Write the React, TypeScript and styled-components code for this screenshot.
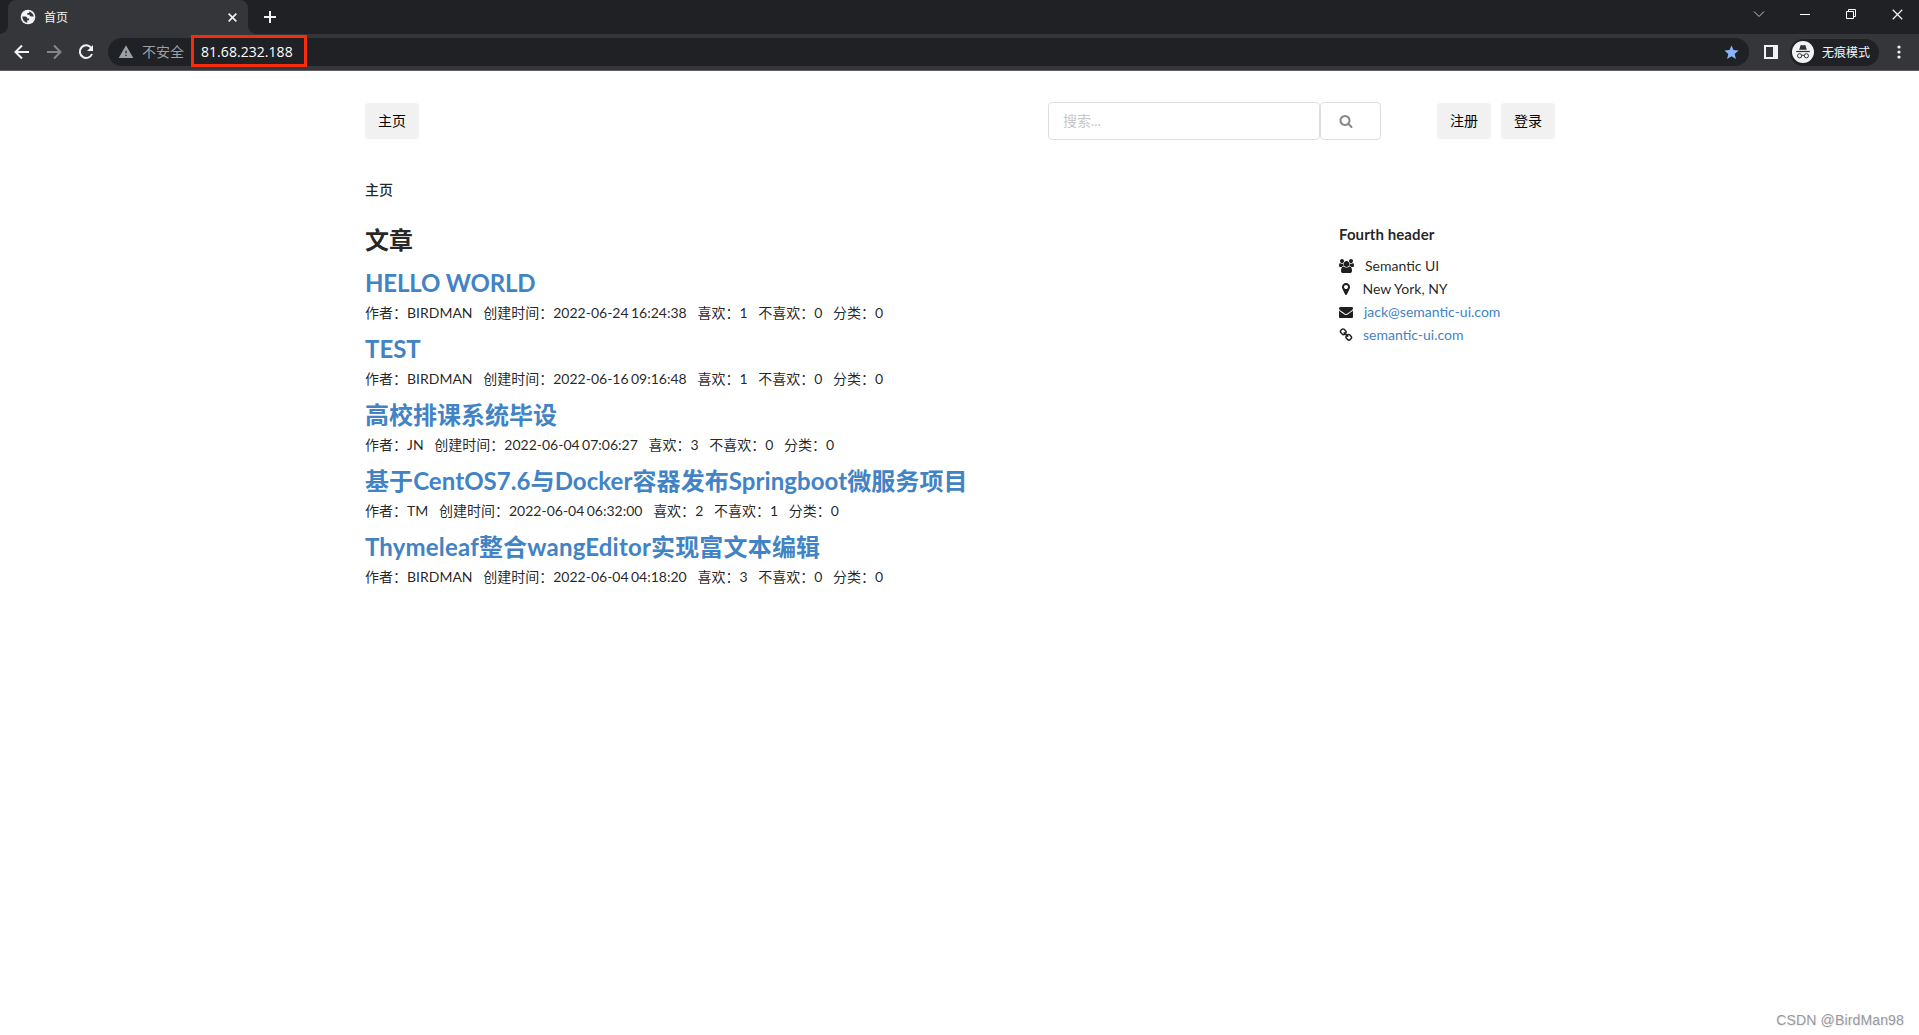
import React from "react";
import styled, { createGlobalStyle } from "styled-components";
import { MdStar, MdWarning } from "react-icons/md";

const GlobalStyle = createGlobalStyle`
  *, *::before, *::after { box-sizing: border-box; }
  body {
    margin: 0;
    background: #fff;
    color: rgba(0, 0, 0, 0.87);
    font-family: Lato, "Noto Sans CJK SC", sans-serif;
    font-size: 14px;
    overflow: hidden;
  }
  svg { display: block; flex: none; }
`;

const Window = styled.div`
  position: relative;
  width: 100%;
  height: 100vh;
  display: flex;
  flex-direction: column;
`;

/* ---------- browser chrome ---------- */

const chromeFont = `"Open Sans", "Noto Sans CJK SC", sans-serif`;

const TitleBar = styled.header`
  display: flex;
  height: 34px;
  padding-left: 8px;
  background: #202124;
  color: #f1f3f4;
  font-family: ${chromeFont};
`;

const Tab = styled.div`
  position: relative;
  display: flex;
  align-items: center;
  width: 240px;
  padding: 0 11px 0 12px;
  border-radius: 8px 8px 0 0;
  background: #35363a;
  font-size: 12px;

  &::before,
  &::after {
    content: "";
    position: absolute;
    bottom: 0;
    width: 8px;
    height: 8px;
  }
  &::before {
    left: -8px;
    background: radial-gradient(circle at 0 0, #202124 7.5px, #35363a 8px);
  }
  &::after {
    right: -8px;
    background: radial-gradient(circle at 100% 0, #202124 7.5px, #35363a 8px);
  }
`;

const TabTitle = styled.span`
  flex: 1;
  margin-left: 8px;
`;

const NewTab = styled.div`
  display: flex;
  align-items: center;
  margin-left: 15px;
`;

const WindowControls = styled.div`
  display: grid;
  grid-template-columns: repeat(4, 46px);
  place-items: center;
  height: 28px;
  margin: 0 -1px 0 auto;
`;

const Toolbar = styled.nav`
  display: flex;
  align-items: center;
  height: 37px;
  padding: 0 13px 0 12px;
  border-bottom: 1px solid #5f5d66;
  background: #35363a;
  color: #f1f3f4;
  font-family: ${chromeFont};
`;

const NavButtons = styled.div`
  display: flex;
  gap: 12px;
  margin-right: 12px;
`;

const AddressBar = styled.div`
  display: flex;
  align-items: center;
  flex: 1;
  height: 28px;
  padding: 0 9px 0 10px;
  border-radius: 14px;
  background: #202124;
  font-size: 14px;
`;

const Insecure = styled.span`
  margin: -2px 0 0 8px;
  color: #9aa0a6;
`;

const UrlBox = styled.span`
  display: flex;
  align-items: center;
  width: 116px;
  height: 32px;
  margin: -2px 0 0 7px;
  padding-left: 7px;
  border: 3px solid #f62c0b;
  color: #fff;
  font-size: 14px;
  letter-spacing: 0.05px;
  white-space: nowrap;
`;

const StarSlot = styled.span`
  margin-left: auto;
`;

const PanelSlot = styled.span`
  margin-left: 15px;
`;

const Profile = styled.div`
  display: flex;
  align-items: center;
  gap: 8px;
  width: 89px;
  height: 27px;
  margin: 0 13px 0 12px;
  padding-left: 2px;
  border-radius: 14px;
  background: #202124;
  font-size: 12px;
  white-space: nowrap;
`;

/* ---------- page ---------- */

const Container = styled.main`
  width: 1190px;
  margin-left: 365px;
  padding-top: 31px;
`;

const TopRow = styled.div`
  display: flex;
  align-items: center;
  height: 38px;
`;

const Button = styled.button<{ $width: number }>`
  width: ${(p) => p.$width}px;
  height: 36px;
  padding: 0;
  border: 0;
  border-radius: 4px;
  background: #f1f1f1;
  color: #000;
  font: 14px/36px Lato, "Noto Sans CJK SC", sans-serif;
`;

const Search = styled.div`
  display: flex;
  margin: 0 56px 0 auto;
`;

const SearchInput = styled.input`
  width: 272px;
  height: 38px;
  padding: 0 14px 2px;
  border: 1px solid #dededf;
  border-radius: 4px;
  outline: 0;
  font: 14px Lato, "Noto Sans CJK SC", sans-serif;
  &::placeholder { color: #c7c7c7; opacity: 1; }
`;

const SearchButton = styled.div`
  display: flex;
  align-items: center;
  width: 61px;
  height: 38px;
  padding-left: 17.5px;
  border: 1px solid #dededf;
  border-radius: 4px;
  color: #888;
`;

const Account = styled.div`
  display: flex;
  gap: 10px;
`;

const Breadcrumb = styled.div`
  height: 20px;
  margin-top: 40px;
  font-weight: 500;
  line-height: 20px;
`;

const Columns = styled.div`
  display: flex;
  justify-content: space-between;
  margin-top: 25px;
`;

const SectionTitle = styled.h2`
  margin: 0;
  font-size: 24px;
  line-height: 30px;
`;

const Article = styled.article`
  height: 66.1px;
  padding-top: 12px;
`;

const ArticleTitle = styled.h2<{ $spacing?: number }>`
  margin: 0;
  color: #4183c4;
  font-size: 24px;
  line-height: 32px;
  letter-spacing: ${(p) => p.$spacing ?? 0}px;
  white-space: nowrap;
`;

const Meta = styled.div`
  display: flex;
  gap: 10.7px;
  height: 20px;
  margin-top: 4px;
  line-height: 20px;
  word-spacing: -1.2px;
  white-space: nowrap;
`;

const Sidebar = styled.aside`
  width: 216px;
`;

const SidebarTitle = styled.h4`
  margin: -1px 0 10px;
  font-size: 15px;
  line-height: 20px;
  letter-spacing: 0.08px;
`;

const ContactRow = styled.div`
  display: flex;
  align-items: center;
  height: 23px;
`;

const IconSlot = styled.span<{ $width: number }>`
  display: flex;
  width: ${(p) => p.$width}px;
  color: #1f1f1f;
`;

const Contact = styled.span<{ $link?: boolean }>`
  color: ${(p) => (p.$link ? "#4183c4" : "rgba(0, 0, 0, 0.87)")};
`;

const Watermark = styled.div`
  position: absolute;
  right: 15px;
  bottom: 5px;
  color: #999;
  font: 14px/20px "Liberation Sans", sans-serif;
  letter-spacing: 0.15px;
  text-shadow: 1px 1px 0 #eee;
`;

/* ---------- Font Awesome 4 shapes ---------- */

const shapes = {
  users:
    "M593 896q-162 5-265 128h-134q-82 0-138-40.5t-56-118.5q0-353 124-353 6 0 43.5 21t97.5 42.5 119 21.5q67 0 133-23-5 37-5 66 0 139 81 256zm1071 637q0 120-73 189.5t-194 69.5h-874q-121 0-194-69.5t-73-189.5q0-53 3.5-103.5t14-109 26.5-108.5 43-97.5 62-81 85.5-53.5 111.5-20q10 0 43 21.5t73 48 107 48 135 21.5 135-21.5 107-48 73-48 43-21.5q61 0 111.5 20t85.5 53.5 62 81 43 97.5 26.5 108.5 14 109 3.5 103.5zm-1024-1277q0 106-75 181t-181 75-181-75-75-181 75-181 181-75 181 75 75 181zm704 384q0 159-112.5 271.5t-271.5 112.5-271.5-112.5-112.5-271.5 112.5-271.5 271.5-112.5 271.5 112.5 112.5 271.5zm576 225q0 78-56 118.5t-138 40.5h-134q-103-123-265-128 81-117 81-256 0-29-5-66 66 23 133 23 59 0 119-21.5t97.5-42.5 43.5-21q124 0 124 353zm-128-609q0 106-75 181t-181 75-181-75-75-181 75-181 181-75 181 75 75 181z",
  marker:
    "M1152 640q0-106-75-181t-181-75-181 75-75 181 75 181 181 75 181-75 75-181zm256 0q0 109-33 179l-364 774q-16 33-47.5 52t-67.5 19-67.5-19-46.5-52l-365-774q-33-70-33-179 0-212 150-362t362-150 362 150 150 362z",
  mail:
    "M1792 710v794q0 66-47 113t-113 47h-1472q-66 0-113-47t-47-113v-794q44 49 101 87 362 246 497 345 57 42 92.5 65.5t94.5 48 110 24.5h2q51 0 110-24.5t94.5-48 92.5-65.5q170-123 498-345 57-39 100-87zm0-294q0 79-49 151t-122 123q-376 261-468 325-10 7-42.5 31t-54 38.5-52 32.5-57.5 27-50 9h-2q-23 0-50-9t-57.5-27-52-32.5-54-38.5-42.5-31q-91-64-262-182.5t-205-142.5q-62-42-117-115.5t-55-136.5q0-78 41.5-130t118.5-52h1472q65 0 112.5 47t47.5 113z",
  link:
    "M1520 1216q0-40-28-68l-208-208q-28-28-68-28-42 0-72 32 3 3 19 18.5t21.5 21.5 15 19 13 25.5 3.5 27.5q0 40-28 68t-68 28q-15 0-27.5-3.5t-25.5-13-19-15-21.5-21.5-18.5-19q-33 31-33 73 0 40 28 68l206 207q27 27 68 27 40 0 68-26l147-146q28-28 28-67zm-703-705q0-40-28-68l-206-207q-28-28-68-28-39 0-68 27l-147 146q-28 28-28 67 0 40 28 68l208 208q27 27 68 27 42 0 72-31-3-3-19-18.5t-21.5-21.5-15-19-13-25.5-3.5-27.5q0-40 28-68t68-28q15 0 27.5 3.5t25.5 13 19 15 21.5 21.5 18.5 19q33-31 33-73zm895 705q0 120-85 203l-147 146q-83 83-203 83-121 0-204-85l-206-207q-83-83-83-203 0-123 88-209l-88-88q-86 88-208 88-120 0-204-84l-208-208q-84-84-84-204t85-203l147-146q83-83 203-83 121 0 204 85l206 207q83 83 83 203 0 123-88 209l88 88q86-88 208-88 120 0 204 84l208 208q84 84 84 204z",
  search:
    "M1216 832q0-185-131.5-316.5t-316.5-131.5-316.5 131.5-131.5 316.5 131.5 316.5 316.5 131.5 316.5-131.5 131.5-316.5zm512 832q0 52-38 90t-90 38q-54 0-90-38l-343-342q-179 124-399 124-143 0-273.5-55.5t-225-150-150-225-55.5-273.5 55.5-273.5 150-225 225-150 273.5-55.5 273.5 55.5 225 150 150 225 55.5 273.5q0 220-124 399l343 343q37 37 37 90z",
};

type ShapeName = keyof typeof shapes;

const Shape = ({ name }: { name: ShapeName }) => {
  const units = name === "users" ? 1920 : 1792;
  return (
    <svg width={(units / 1792) * 14} height={14} viewBox={`0 0 ${units} 1792`} fill="currentColor">
      <path d={shapes[name]} />
    </svg>
  );
};

const GlobeIcon = () => (
  <svg width="16" height="16" viewBox="0 0 16 16">
    <circle cx="8" cy="8" r="7.3" fill="#f1f3f4" />
    <path
      d="M2.3 7.6h3.2q1.6.2 1.8 1.8h1.8v1.8H7.2v2.6q-4.6-.9-4.9-6.2zM9.2 2.4v1.5H7.3v1.9h2q.3 1.7 2.1 1.8h2.3Q13.200 3.600 9.200 2.400z"
      fill="#35363a"
    />
  </svg>
);

const ArrowIcon = ({ forward }: { forward?: boolean }) => (
  <svg width="20" height="20" viewBox="0 0 20 20" fill="none" stroke={forward ? "#85868a" : "#f1f3f4"} strokeWidth="2">
    <path d={forward ? "M3 10h13M10 3.5l6.5 6.5-6.5 6.5" : "M17 10H4M10 3.5L3.5 10l6.5 6.5"} />
  </svg>
);

const ReloadIcon = () => (
  <svg width="20" height="20" viewBox="0 0 20 20" fill="none" stroke="#f1f3f4" strokeWidth="2">
    <path d="M15.3 6A6.3 6.3 0 1 0 16 12" />
    <path d="M17 3v6h-6z" fill="#f1f3f4" stroke="none" />
  </svg>
);

const CloseIcon = ({ size, weight }: { size: number; weight: number }) => (
  <svg width={size} height={size} viewBox="0 0 10 10" stroke="#f1f3f4" strokeWidth={weight}>
    <path d="M.7.7l8.6 8.6M9.3.7L.7 9.3" />
  </svg>
);

const IncognitoIcon = () => (
  <svg width="22" height="22" viewBox="0 0 22 22" fill="none" stroke="#303135">
    <circle cx="11" cy="11" r="11" fill="#f1f3f4" stroke="none" />
    <path d="M7.2 8.8l1.3-4.4q.3-.6 1-.3l1.5.5 1.5-.5q.7-.3 1 .3l1.3 4.4z" fill="#303135" stroke="none" />
    <path d="M4.2 10.5h13.6" strokeWidth="1.2" />
    <circle cx="7.6" cy="14.8" r="2.1" />
    <circle cx="14.4" cy="14.8" r="2.1" />
    <path d="M9.7 14.5q1.3-.9 2.6 0" />
  </svg>
);

interface Post {
  title: string;
  spacing?: number;
  author: string;
  created: string;
  likes: number;
  dislikes: number;
  category: number;
}

const posts: Post[] = [
  { title: "HELLO WORLD", spacing: -0.15, author: "BIRDMAN", created: "2022-06-24 16:24:38", likes: 1, dislikes: 0, category: 0 },
  { title: "TEST", author: "BIRDMAN", created: "2022-06-16 09:16:48", likes: 1, dislikes: 0, category: 0 },
  { title: "高校排课系统毕设", author: "JN", created: "2022-06-04 07:06:27", likes: 3, dislikes: 0, category: 0 },
  { title: "基于CentOS7.6与Docker容器发布Springboot微服务项目", spacing: 0.07, author: "TM", created: "2022-06-04 06:32:00", likes: 2, dislikes: 1, category: 0 },
  { title: "Thymeleaf整合wangEditor实现富文本编辑", spacing: 0.18, author: "BIRDMAN", created: "2022-06-04 04:18:20", likes: 3, dislikes: 0, category: 0 },
];

const contacts: { icon: ShapeName; text: string; offset: number; link?: boolean }[] = [
  { icon: "users", text: "Semantic UI", offset: 26 },
  { icon: "marker", text: "New York, NY", offset: 23.5 },
  { icon: "mail", text: "jack@semantic-ui.com", offset: 25, link: true },
  { icon: "link", text: "semantic-ui.com", offset: 24, link: true },
];

export default function App() {
  return (
    <Window>
      <GlobalStyle />
      <TitleBar>
        <Tab>
          <GlobeIcon />
          <TabTitle>首页</TabTitle>
          <CloseIcon size={9} weight={1.8} />
        </Tab>
        <NewTab>
          <svg width="14" height="14" viewBox="0 0 14 14" stroke="#f1f3f4" strokeWidth="2">
            <path d="M7 1v12M1 7h12" />
          </svg>
        </NewTab>
        <WindowControls>
          <svg width="18" height="10" viewBox="0 0 18 10" fill="none" stroke="#c8c9ca">
            <path d="M4 2.5l5 5 5-5" />
          </svg>
          <svg width="18" height="10" viewBox="0 0 18 10" stroke="#fff">
            <path d="M4 5.5h10" />
          </svg>
          <svg width="16" height="10" viewBox="0 0 16 10" fill="none" stroke="#fff">
            <path d="M3.500 2.500h7v7h-7zM5.500 2.500v-2h7v7h-2" />
          </svg>
          <CloseIcon size={11} weight={1.1} />
        </WindowControls>
      </TitleBar>
      <Toolbar>
        <NavButtons>
          <ArrowIcon />
          <ArrowIcon forward />
          <ReloadIcon />
        </NavButtons>
        <AddressBar>
          <MdWarning size={16} color="#9aa0a6" />
          <Insecure>不安全</Insecure>
          <UrlBox>81.68.232.188</UrlBox>
          <StarSlot>
            <MdStar size={17} color="#8ab4f8" />
          </StarSlot>
        </AddressBar>
        <PanelSlot>
          <svg width="14" height="14" viewBox="0 0 14 14">
            <path d="M0 0h14v14H0zM2 2v10h7V2z" fill="#f1f3f4" fillRule="evenodd" />
          </svg>
        </PanelSlot>
        <Profile>
          <IncognitoIcon />
          无痕模式
        </Profile>
        <svg width="14" height="16" viewBox="0 0 14 16" fill="#f1f3f4">
          <circle cx="7" cy="3" r="1.6" />
          <circle cx="7" cy="8" r="1.6" />
          <circle cx="7" cy="13" r="1.6" />
        </svg>
      </Toolbar>

      <Container>
        <TopRow>
          <Button $width={54}>主页</Button>
          <Search>
            <SearchInput placeholder="搜索..." />
            <SearchButton>
              <Shape name="search" />
            </SearchButton>
          </Search>
          <Account>
            <Button $width={54}>注册</Button>
            <Button $width={54}>登录</Button>
          </Account>
        </TopRow>
        <Breadcrumb>主页</Breadcrumb>
        <Columns>
          <section>
            <SectionTitle>文章</SectionTitle>
            {posts.map((post) => (
              <Article key={post.title}>
                <ArticleTitle $spacing={post.spacing}>{post.title}</ArticleTitle>
                <Meta>
                  <span>作者：{post.author}</span>
                  <span>创建时间：{post.created}</span>
                  <span>喜欢：{post.likes}</span>
                  <span>不喜欢：{post.dislikes}</span>
                  <span>分类：{post.category}</span>
                </Meta>
              </Article>
            ))}
          </section>
          <Sidebar>
            <SidebarTitle>Fourth header</SidebarTitle>
            {contacts.map((c) => (
              <ContactRow key={c.text}>
                <IconSlot $width={c.offset}>
                  <Shape name={c.icon} />
                </IconSlot>
                <Contact $link={c.link}>{c.text}</Contact>
              </ContactRow>
            ))}
          </Sidebar>
        </Columns>
      </Container>
      <Watermark>CSDN @BirdMan98</Watermark>
    </Window>
  );
}
